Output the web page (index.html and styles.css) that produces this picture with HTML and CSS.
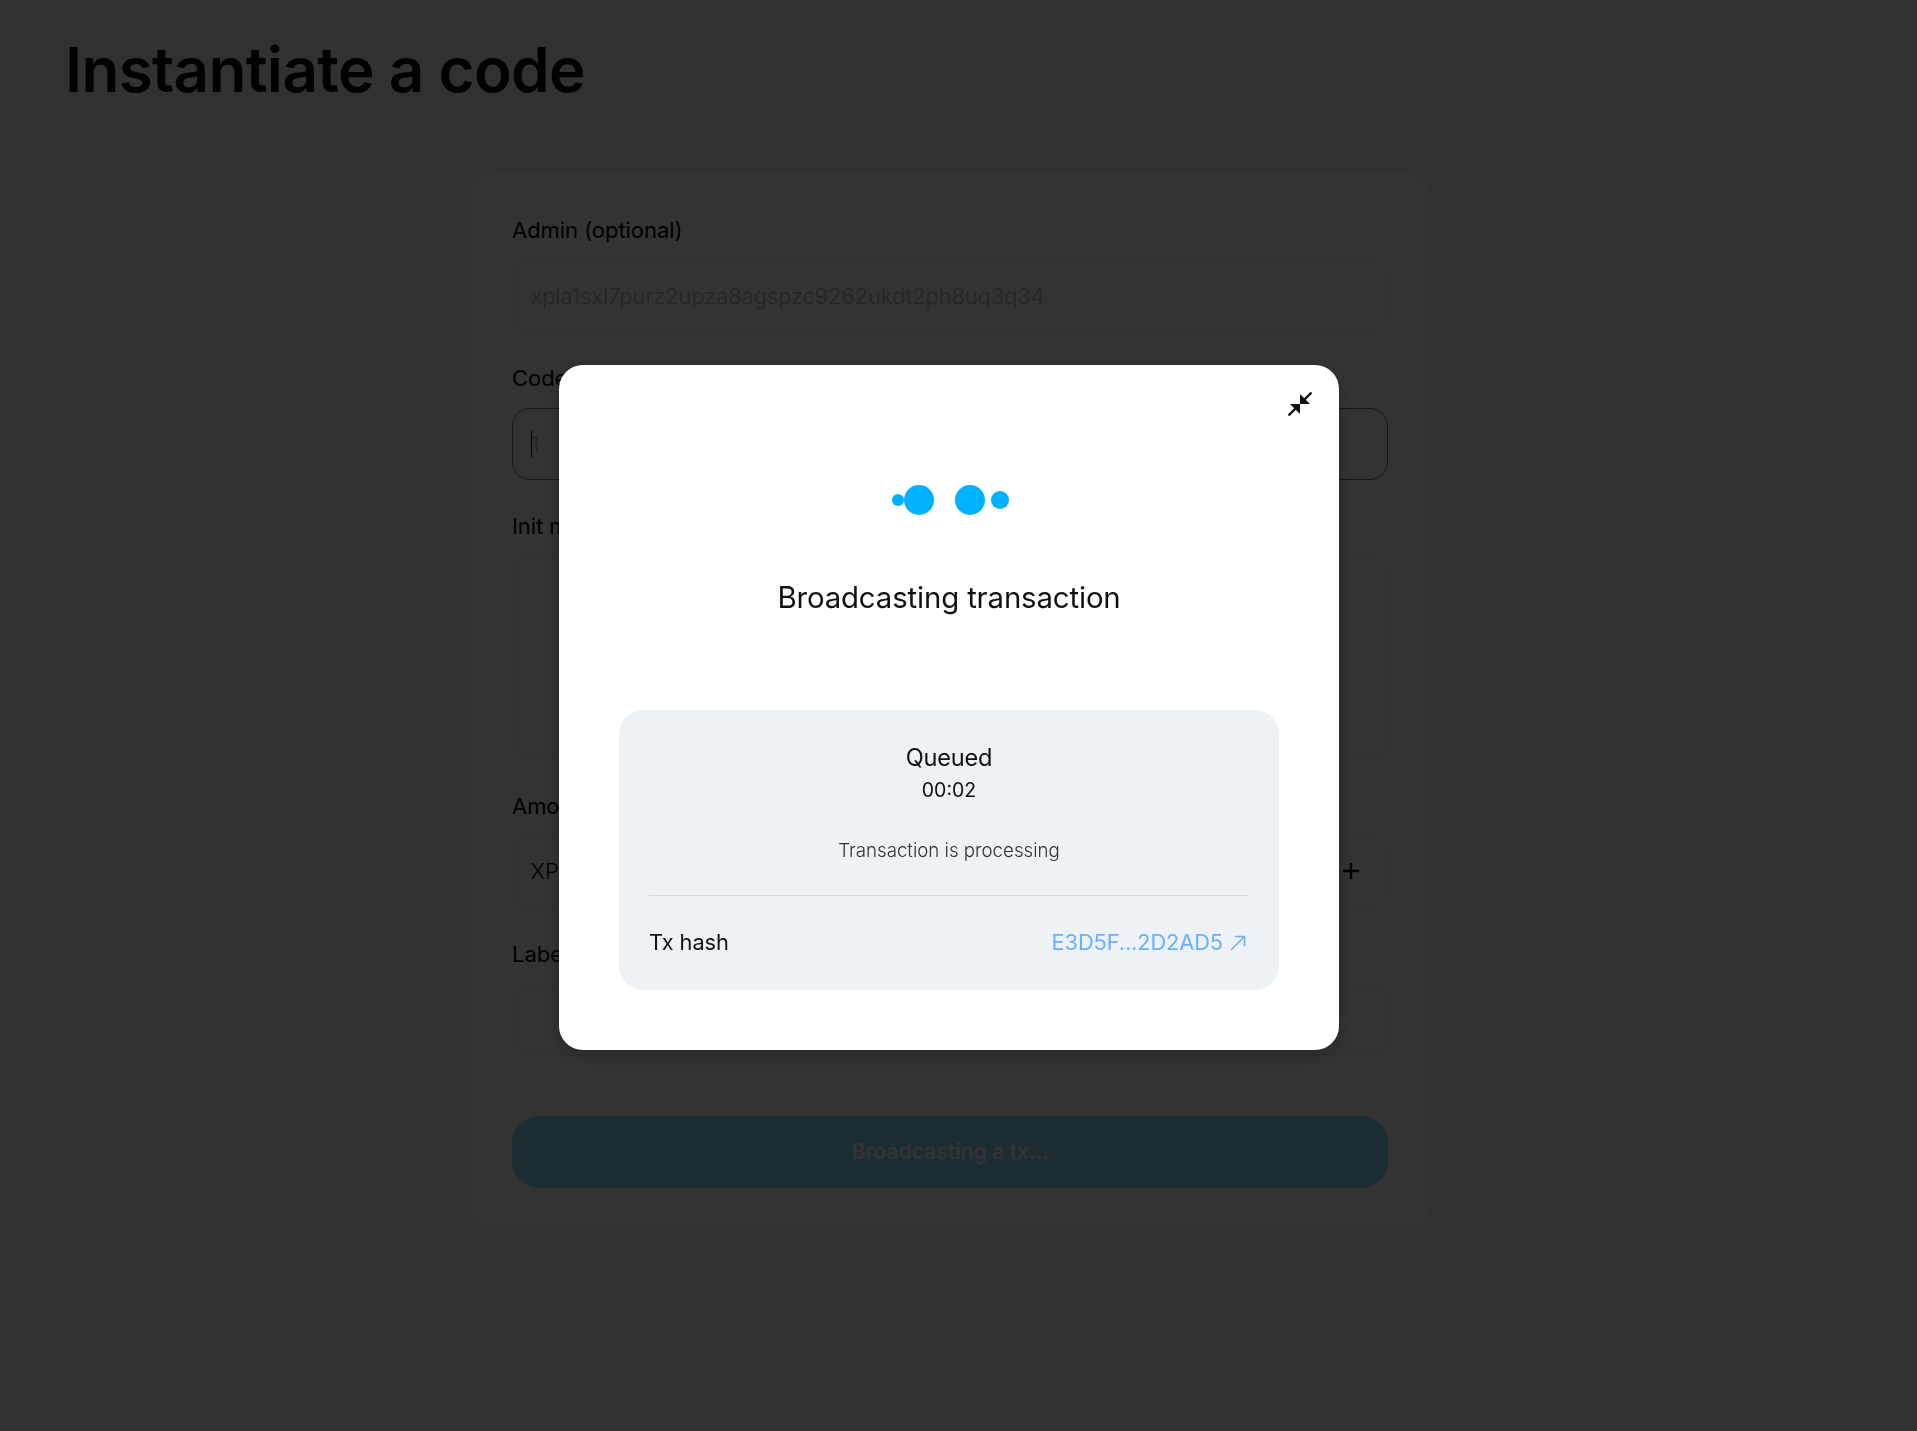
FILE: index.html
```
<!DOCTYPE html>
<html lang="en">
<head>
<meta charset="utf-8">
<title>Instantiate a code</title>
<link rel="stylesheet" href="styles.css">
</head>
<body>
<main class="page">
  <header class="page-header"><h1 class="title">Instantiate a code</h1></header>
  <form class="card">
    <div class="field">
      <label class="label">Admin (optional)</label>
      <div class="input placeholder">xpla1sxl7purz2upza8agspzc9262ukdt2ph8uq3q34</div>
    </div>
    <div class="field">
      <label class="label">Code ID</label>
      <div class="input placeholder focused"><span class="caret"></span>1</div>
    </div>
    <div class="field">
      <label class="label">Init msg</label>
      <div class="input textarea"></div>
    </div>
    <div class="field">
      <label class="label">Amount</label>
      <div class="input amount"><span>XPLA</span>
        <svg class="plus" viewBox="0 0 16 16"><path d="M8 0v16M0 8h16" stroke="currentColor" stroke-width="2.4"/></svg>
      </div>
    </div>
    <div class="field">
      <label class="label">Label</label>
      <div class="input"></div>
    </div>
    <button class="submit" type="button">Broadcasting a tx...</button>
  </form>
</main>
<div class="overlay">
  <section class="modal">
    <button class="collapse" type="button" aria-label="Minimize">
      <svg viewBox="0 0 26 26" width="26" height="26"><path d="M13 13V3l10 10zM13 13v10L3 13z" fill="currentColor"/><path d="M17 9l7.5-7.5M9 17l-7.5 7.5" stroke="currentColor" stroke-width="2.4"/></svg>
    </button>
    <svg class="loader" viewBox="0 0 120 30" width="120" height="30">
      <circle cx="9" cy="15" r="6"/><circle cx="30" cy="15" r="15"/><circle cx="81" cy="15" r="15"/><circle cx="111" cy="15" r="9"/>
    </svg>
    <h2 class="modal-title">Broadcasting transaction</h2>
    <div class="status">
      <div class="queued">Queued</div>
      <div class="timer">00:02</div>
      <div class="message">Transaction is processing</div>
      <div class="hash-row">
        <span>Tx hash</span>
        <a class="hash">E3D5F...2D2AD5
          <svg viewBox="0 0 16 16" width="16" height="16"><path d="M1 15L14.3 1.7M4.8 1.5h9.7v9.7" fill="none" stroke="currentColor" stroke-width="1.6"/></svg>
        </a>
      </div>
    </div>
  </section>
</div>
</body>
</html>
```
FILE: styles.css
```
* { box-sizing: border-box; }
html, body { height: 100%; }
body {
  margin: 0;
  background: #f5f5f5;
  color: #111;
  font-family: Inter, sans-serif;
  overflow: hidden;
}
.page { width: 1900px; padding: 0 65px; }
.page-header {
  height: 145px;
  padding-top: 32px;
  border-bottom: 1px solid #dfdfdf;
}
.title {
  margin: 0;
  color: #080c0c;
  font-size: 62px;
  line-height: 76px;
  font-weight: 600;
  letter-spacing: -.7px;
}
.card {
  display: flex;
  flex-direction: column;
  gap: 29px;
  width: 960px;
  height: 1058px;
  margin: 27px auto 0;
  padding: 41px 42px;
  border-radius: 27px;
  background: #fff;
}
.field { display: flex; flex-direction: column; gap: 13px; }
.label { font-size: 22px; line-height: 34px; font-weight: 400; letter-spacing: -.05px; color: #000; }
.input {
  display: flex;
  align-items: center;
  height: 72px;
  padding: 0 17.5px 1px;
  border: 1px solid #e8e8e8;
  border-radius: 18px;
  font-size: 21.9px;
  font-weight: 300;
}
.placeholder { color: #b4b6b8; }
.focused { border-color: #777; }
.caret { width: 1px; height: 26px; margin-right: -1px; background: #000; }
.textarea { height: 204px; }
.amount { justify-content: space-between; padding-right: 28px; padding-bottom: 2px; color: #000; }
.plus { width: 16px; height: 16px; }
.submit {
  height: 72px;
  margin-top: 31px;
  padding: 0 0 2px;
  border: 0;
  border-radius: 27px;
  background: #87dcff;
  color: #fff;
  font: 600 21.5px Inter, sans-serif;
  letter-spacing: -.2px;
}
.overlay {
  position: fixed;
  inset: 0;
  padding: 365px 17px 0 0;
  background: rgba(0, 0, 0, .8);
}
.modal {
  position: relative;
  display: flex;
  flex-direction: column;
  align-items: center;
  width: 780px;
  height: 685px;
  margin: 0 auto 0 559px;
  padding: 120px 60px 60px;
  border-radius: 24px;
  background: #fff;
  box-shadow: 0 5px 18px rgba(0, 0, 0, .25);
}
.collapse {
  position: absolute;
  top: 26px;
  right: 26px;
  width: 26px;
  height: 26px;
  padding: 0;
  border: 0;
  background: none;
  color: #111;
}
.collapse svg { display: block; }
.loader { fill: #00b1ff; }
.modal-title {
  margin: 65px 0 0;
  font-size: 29.4px;
  line-height: 36px;
  font-weight: 400;
  letter-spacing: -.15px;
}
.status {
  width: 660px;
  height: 280px;
  margin-top: 94px;
  padding: 32px 30px 0;
  border-radius: 24px;
  background: #eef1f6;
  text-align: center;
}
.queued { font-size: 23.6px; line-height: 32px; letter-spacing: -.2px; }
.timer { font-size: 19.5px; line-height: 32px; }
.message { padding: 29px 0 28px; font-size: 18.7px; line-height: 32px; font-weight: 300; color: #333; }
.hash-row {
  display: flex;
  align-items: center;
  justify-content: space-between;
  height: 92px;
  border-top: 1px solid #d8dbdf;
  font-size: 21.8px;
  letter-spacing: -.05px;
}
.hash { display: flex; align-items: center; gap: 7px; padding-right: 3px; color: #66b2ff; letter-spacing: -.1px; }
.hash svg { margin-top: 2px; }
```
